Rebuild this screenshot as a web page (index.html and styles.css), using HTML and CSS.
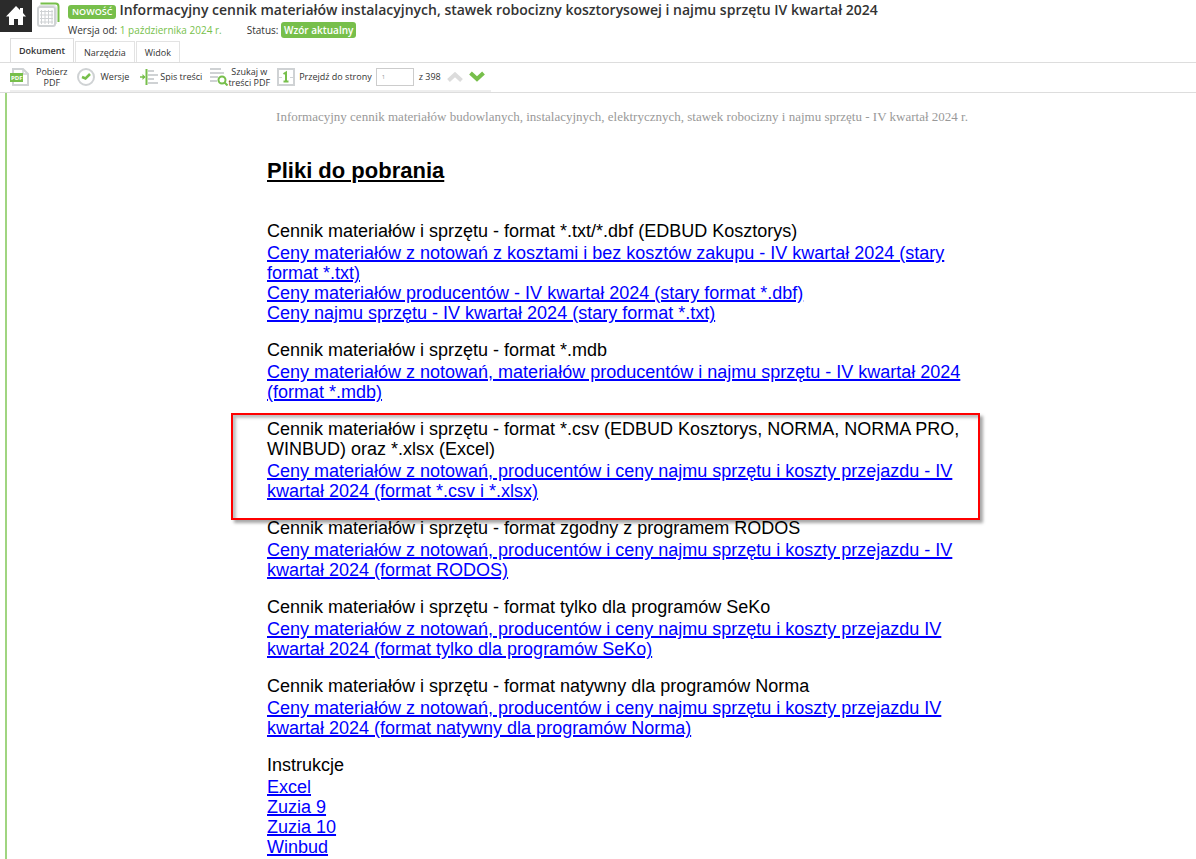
FILE: index.html
```html
<!DOCTYPE html>
<html lang="pl">
<head>
  <meta charset="UTF-8" />
  <meta name="viewport" content="width=device-width, initial-scale=1.0" />
  <title>Informacyjny cennik materiałów instalacyjnych</title>
  <link rel="stylesheet" href="styles.css">
</head>
<body>
  <header class="header">
    <div class="top">
      <a class="home" href="#" aria-label="Strona główna">
        <svg width="20" height="20" viewBox="0 0 20 20"><path fill="#fff" d="M10 0 L14 4 V2 H17 V7 L20 10.500 H17 V19 H12 V13 H8 V19 H3 V10.500 H0 Z"/></svg>
      </a>
      <svg class="doc-icon" width="23" height="25" viewBox="0 0 23 25" fill="none">
        <path d="M3.500 1.500 H18.500 Q21.500 1.500 21.500 4.500 V20" stroke="#77bf4b" stroke-width="2"/>
        <path d="M2 3.500 H17 Q19.500 3.500 19.500 6 V22" stroke="#e3e5e6"/>
        <rect x="1" y="5" width="17" height="19" rx="2" fill="#fff" stroke="#cfd2d4" stroke-width="2"/>
        <path d="M3 9.500 H16 M3 13 H16 M3 16.500 H16 M3 20 H16 M4.500 8 V22 M8 8 V22 M11.500 8 V22 M15 8 V22" stroke="#cfd2d4"/>
      </svg>
      <div class="info">
        <div class="title-row">
          <span class="badge">NOWOŚĆ</span>
          <h1>Informacyjny cennik materiałów instalacyjnych, stawek robocizny kosztorysowej i najmu sprzętu IV kwartał 2024</h1>
        </div>
        <div class="meta">
          <span>Wersja od: <span class="date">1 października 2024 r.</span></span>
          <span>Status: <span class="status">Wzór aktualny</span></span>
        </div>
      </div>
    </div>

    <nav class="tabs">
      <button class="tab active">Dokument</button>
      <button class="tab">Narzędzia</button>
      <button class="tab">Widok</button>
    </nav>

    <div class="toolbar">
      <button class="tool pdf">
        <svg width="20" height="20" viewBox="0 0 20 20" fill="none">
          <path d="M3 6 V2 H13 L18 7 V18 H3 V15" stroke="#cfd2d4" stroke-width="2"/>
          <path d="M13 2 V7 H18" stroke="#cfd2d4" stroke-width="1.500"/>
          <rect y="6" width="13" height="9" fill="#77bf4b"/>
          <text x="1" y="13" class="pdf-text">PDF</text>
        </svg>
        <span>Pobierz<br>PDF</span>
      </button>
      <button class="tool versions">
        <svg width="18" height="18" viewBox="0 0 18 18" fill="none">
          <circle cx="9" cy="9" r="8" stroke="#cfd2d4" stroke-width="2"/>
          <path d="M5 9 L8.500 10.500 L13 6" stroke="#77bf4b" stroke-width="2.500"/>
        </svg>
        <span>Wersje</span>
      </button>
      <button class="tool contents">
        <svg width="18" height="16" viewBox="0 0 18 16" fill="none">
          <path d="M0 8 H5" stroke="#77bf4b" stroke-width="1.500"/>
          <path d="M2.500 5 L5.500 8 L2.500 11 Z" fill="#77bf4b"/>
          <path d="M6.500 0 V16" stroke="#77bf4b" stroke-width="2"/>
          <path d="M8 2 H14 M8 6 H18 M8 10 H14 M8 14 H18" stroke="#cfd2d4" stroke-width="2"/>
        </svg>
        <span>Spis treści</span>
      </button>
      <button class="tool search">
        <svg width="18" height="19" viewBox="0 0 18 19" fill="none">
          <path d="M0 2 H11 M0 6 H14 M0 10 H8 M0 14 H7" stroke="#cfd2d4" stroke-width="2"/>
          <circle cx="12" cy="13" r="3.500" stroke="#77bf4b" stroke-width="2"/>
          <path d="M14.500 15.500 L17.500 18.500" stroke="#77bf4b" stroke-width="2"/>
        </svg>
        <span>Szukaj w<br>treści PDF</span>
      </button>
      <svg class="page-icon" width="18" height="18" viewBox="0 0 18 18" fill="none">
        <rect x="1" y="1" width="16" height="16" stroke="#cfd2d4" stroke-width="2"/>
        <path d="M2 9.500 H5 M13 9.500 H16" stroke="#cfd2d4"/>
        <path d="M6.500 6 L9 4.500 V14 M6.500 13.500 H11.500" stroke="#77bf4b" stroke-width="2"/>
      </svg>
      <label for="page">Przejdź do strony</label>
      <input id="page" type="text" value="1">
      <span class="total">z 398</span>
      <button class="arrow" aria-label="Poprzednia strona">
        <svg width="16" height="10" viewBox="0 0 16 10" fill="none"><path d="M1.500 8.500 L8 2.500 L14.500 8.500" stroke="#dcdcdc" stroke-width="4"/></svg>
      </button>
      <button class="arrow" aria-label="Następna strona">
        <svg width="16" height="11" viewBox="0 0 16 11" fill="none"><path d="M1.500 2 L8 8 L14.500 2" stroke="#77bf4b" stroke-width="4"/></svg>
      </button>
    </div>
  </header>

  <main class="document">
    <div class="page">
      <p class="running-head">Informacyjny cennik materiałów budowlanych, instalacyjnych, elektrycznych, stawek robocizny i najmu sprzętu - IV kwartał 2024 r.</p>
      <h2>Pliki do pobrania</h2>

      <section class="group">
        <p>Cennik materiałów i sprzętu - format *.txt/*.dbf (EDBUD Kosztorys)</p>
        <ul>
          <li><a href="#">Ceny materiałów z notowań z kosztami i bez kosztów zakupu - IV kwartał 2024 (stary format *.txt)</a></li>
          <li><a href="#">Ceny materiałów producentów - IV kwartał 2024 (stary format *.dbf)</a></li>
          <li><a href="#">Ceny najmu sprzętu - IV kwartał 2024 (stary format *.txt)</a></li>
        </ul>
      </section>

      <section class="group">
        <p>Cennik materiałów i sprzętu - format *.mdb</p>
        <ul>
          <li><a href="#">Ceny materiałów z notowań, materiałów producentów i najmu sprzętu - IV kwartał 2024 (format *.mdb)</a></li>
        </ul>
      </section>

      <section class="group highlighted">
        <p>Cennik materiałów i sprzętu - format *.csv (EDBUD Kosztorys, NORMA, NORMA PRO, WINBUD) oraz *.xlsx (Excel)</p>
        <ul>
          <li><a href="#">Ceny materiałów z notowań, producentów i ceny najmu sprzętu i koszty przejazdu - IV kwartał 2024 (format *.csv i *.xlsx)</a></li>
        </ul>
      </section>

      <section class="group">
        <p>Cennik materiałów i sprzętu - format zgodny z programem RODOS</p>
        <ul>
          <li><a href="#">Ceny materiałów z notowań, producentów i ceny najmu sprzętu i koszty przejazdu - IV kwartał 2024 (format RODOS)</a></li>
        </ul>
      </section>

      <section class="group">
        <p>Cennik materiałów i sprzętu - format tylko dla programów SeKo</p>
        <ul>
          <li><a href="#">Ceny materiałów z notowań, producentów i ceny najmu sprzętu i koszty przejazdu IV kwartał 2024 (format tylko dla programów SeKo)</a></li>
        </ul>
      </section>

      <section class="group">
        <p>Cennik materiałów i sprzętu - format natywny dla programów Norma</p>
        <ul>
          <li><a href="#">Ceny materiałów z notowań, producentów i ceny najmu sprzętu i koszty przejazdu IV kwartał 2024 (format natywny dla programów Norma)</a></li>
        </ul>
      </section>

      <section class="group">
        <p>Instrukcje</p>
        <ul>
          <li><a href="#">Excel</a></li>
          <li><a href="#">Zuzia 9</a></li>
          <li><a href="#">Zuzia 10</a></li>
          <li><a href="#">Winbud</a></li>
        </ul>
      </section>
    </div>
  </main>
</body>
</html>
```
FILE: styles.css
```css
* { box-sizing: border-box; }
body {
  margin: 0;
  height: 100vh;
  display: flex;
  flex-direction: column;
  overflow: hidden;
  background: #fff;
  color: #333;
  font-family: 'Open Sans', sans-serif;
}
h1, h2, p, ul { margin: 0; padding: 0; }
button {
  padding: 0;
  border: none;
  background: none;
  color: inherit;
  font-family: inherit;
}
svg { display: block; flex-shrink: 0; }

/* Header */
.header {
  flex-shrink: 0;
  border-bottom: 1px solid #ddd;
}
.top {
  display: flex;
  align-items: flex-start;
  height: 39px;
}
.home {
  display: flex;
  align-items: center;
  justify-content: center;
  width: 32px;
  height: 32px;
  background: #2b2b2b;
}
.doc-icon { margin: 2px 8px 0 5px; }
.title-row {
  display: flex;
  align-items: center;
  gap: 3px;
  height: 20px;
}
.badge {
  height: 14px;
  margin-top: 4px;
  padding: 0 4px;
  border-radius: 3px;
  background: #77bf4b;
  color: #fff;
  font-size: 9px;
  font-weight: 600;
  line-height: 14px;
}
h1 {
  font-size: 14px;
  font-weight: 600;
  line-height: 20px;
  white-space: nowrap;
}
.meta {
  display: flex;
  gap: 25px;
  font-size: 10px;
  line-height: 20px;
}
.date { color: #77bf4b; }
.status {
  display: inline-block;
  padding: 0 3px;
  border-radius: 3px;
  background: #77bf4b;
  color: #fff;
  font-weight: 600;
  line-height: 16px;
}

/* Tabs */
.tabs {
  display: flex;
  align-items: flex-end;
  gap: 1px;
  height: 24px;
  padding-left: 10px;
  border-bottom: 1px solid #ddd;
}
.tab {
  height: 21px;
  padding: 0 8px;
  border: 1px solid #e3e3e3;
  border-bottom: none;
  font-size: 9px;
}
.tab.active {
  height: 24px;
  border-color: #ddd;
  font-weight: 600;
}

/* Toolbar */
.toolbar {
  display: flex;
  align-items: center;
  width: fit-content;
  height: 29px;
  margin-left: 10px;
  border-bottom: 2px solid #eee;
  font-size: 9px;
  line-height: 11px;
  white-space: nowrap;
}
.tool {
  display: flex;
  align-items: center;
  gap: 6px;
  font-size: 9px;
  line-height: 11px;
}
.pdf { margin-right: 9px; }
.versions { margin-right: 11px; }
.contents { gap: 2px; margin-right: 8px; }
.search { gap: 0; }
.pdf-text { fill: #fff; font: bold 6px 'Open Sans', sans-serif; }
.page-icon { margin: 0 4px 0 7px; }
#page {
  width: 38px;
  height: 18px;
  margin: 0 5px 0 4px;
  padding: 0 5px;
  border: 1px solid #ccc;
  color: #999;
  font: 6px 'Open Sans', sans-serif;
}
.total { margin-right: 6px; }
.arrow { margin-right: 6px; }

/* Document */
.document {
  flex: 1;
  min-height: 0;
  overflow: hidden;
  margin-left: 5px;
  border-left: 2px solid #a0d580;
}
.page {
  max-width: 970px;
  padding: 16px 0 0 260px;
  color: #000;
  font: 18px/20px 'Liberation Sans', Arial, sans-serif;
}
.running-head {
  color: #999;
  font: 13px/16px 'Liberation Serif', 'Times New Roman', serif;
  text-align: center;
}
h2 {
  margin: 33px 0 37px;
  font-size: 22px;
  line-height: 26px;
  text-decoration: underline;
}
.group { margin-bottom: 17px; }
.group p { margin-bottom: 2px; }
.group ul { list-style: none; }
.group a {
  color: #00f;
  text-decoration-thickness: 2px;
}

/* Red frame drawn over the selected group */
.highlighted { position: relative; }
.highlighted::after {
  content: '';
  position: absolute;
  inset: -6px -3px -19px -36px;
  border: 2px solid #f00;
  box-shadow: 3px 3px 3px rgba(0, 0, 0, 0.35), inset 3px 3px 3px rgba(0, 0, 0, 0.25);
  pointer-events: none;
}
```
